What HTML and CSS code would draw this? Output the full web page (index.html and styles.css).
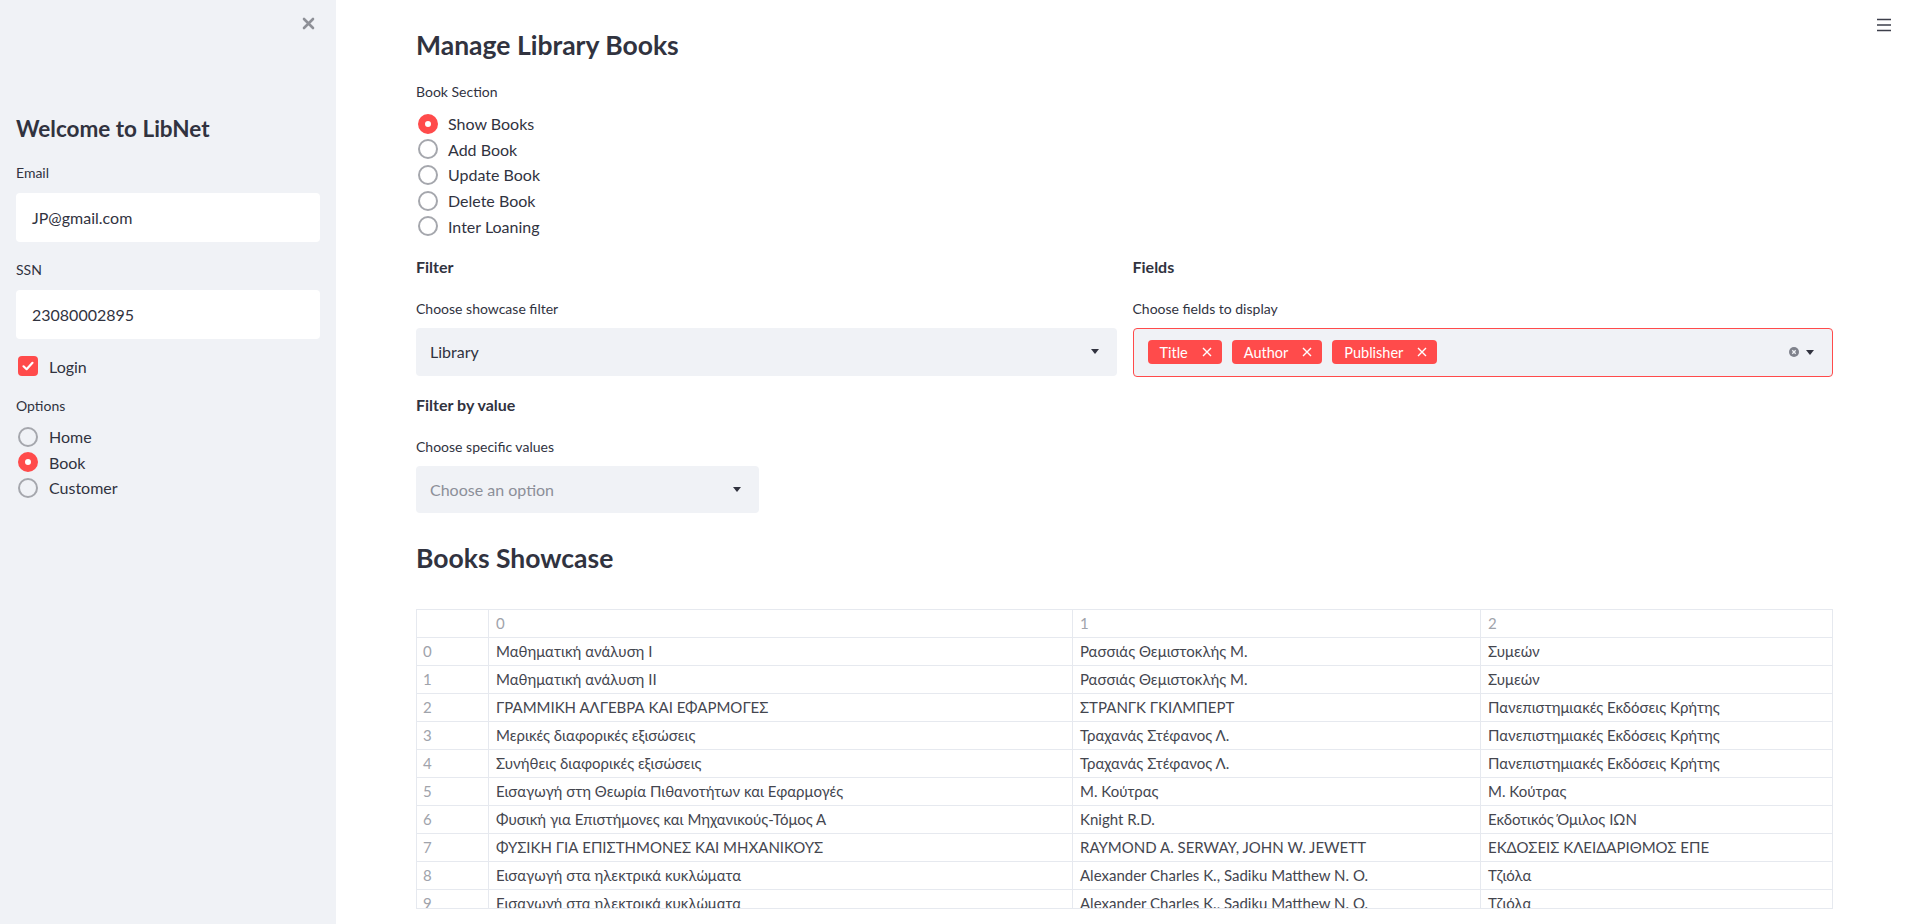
FILE: index.html
```html
<!DOCTYPE html>
<html lang="en">
<head>
<meta charset="utf-8">
<title>LibNet</title>
<link rel="stylesheet" href="styles.css">
</head>
<body>
<div class="app">
  <aside class="sidebar">
    <div class="close-row">
      <svg class="close-icon" width="13" height="13" viewBox="0 0 13 13"><path d="M2 2 L11 11 M11 2 L2 11" stroke="#8e9097" stroke-width="2.6" stroke-linecap="round"/></svg>
    </div>
    <h2 class="side-title">Welcome to LibNet</h2>
    <div class="side-label">Email</div>
    <div class="side-input">JP@gmail.com</div>
    <div class="side-label ssn">SSN</div>
    <div class="side-input">23080002895</div>
    <div class="check-row">
      <span class="checkbox"><svg width="14" height="14" viewBox="0 0 14 14"><path d="M2.5 7.3 L5.6 10.2 L11.5 3.8" fill="none" stroke="#fff" stroke-width="2.2" stroke-linecap="round" stroke-linejoin="round"/></svg></span>
      <span class="check-text">Login</span>
    </div>
    <div class="side-label options">Options</div>
    <div class="radio-group side-radios">
      <div class="radio-row"><span class="radio"></span><span>Home</span></div>
      <div class="radio-row"><span class="radio on"></span><span>Book</span></div>
      <div class="radio-row"><span class="radio"></span><span>Customer</span></div>
    </div>
  </aside>

  <main class="main">
    <svg class="menu-icon" width="14" height="14" viewBox="0 0 14 14"><path d="M0 1.5 H14 M0 7 H14 M0 12.5 H14" stroke="#3d3f4b" stroke-width="1.6"/></svg>
    <h1 class="page-title">Manage Library Books</h1>
    <div class="label">Book Section</div>
    <div class="radio-group main-radios">
      <div class="radio-row"><span class="radio on"></span><span>Show Books</span></div>
      <div class="radio-row"><span class="radio"></span><span>Add Book</span></div>
      <div class="radio-row"><span class="radio"></span><span>Update Book</span></div>
      <div class="radio-row"><span class="radio"></span><span>Delete Book</span></div>
      <div class="radio-row"><span class="radio"></span><span>Inter Loaning</span></div>
    </div>

    <div class="columns">
      <div class="col">
        <div class="section-head">Filter</div>
        <div class="label">Choose showcase filter</div>
        <div class="select">
          <span class="select-value">Library</span>
          <svg class="caret" width="8" height="5" viewBox="0 0 8 5"><path d="M0 0 H8 L4 5 Z" fill="#31333f"/></svg>
        </div>
        <div class="section-head">Filter by value</div>
        <div class="label">Choose specific values</div>
        <div class="select small">
          <span class="select-placeholder">Choose an option</span>
          <svg class="caret" width="8" height="5" viewBox="0 0 8 5"><path d="M0 0 H8 L4 5 Z" fill="#31333f"/></svg>
        </div>
      </div>
      <div class="col">
        <div class="section-head">Fields</div>
        <div class="label">Choose fields to display</div>
        <div class="multiselect">
          <div class="tags">
            <span class="tag">Title<svg width="10" height="10" viewBox="0 0 10 10"><path d="M1 1 L9 9 M9 1 L1 9" stroke="#fff" stroke-width="1.4"/></svg></span>
            <span class="tag">Author<svg width="10" height="10" viewBox="0 0 10 10"><path d="M1 1 L9 9 M9 1 L1 9" stroke="#fff" stroke-width="1.4"/></svg></span>
            <span class="tag">Publisher<svg width="10" height="10" viewBox="0 0 10 10"><path d="M1 1 L9 9 M9 1 L1 9" stroke="#fff" stroke-width="1.4"/></svg></span>
          </div>
          <div class="ms-icons">
            <svg width="10" height="10" viewBox="0 0 10 10"><circle cx="5" cy="5" r="5" fill="#7f828c"/><path d="M3.3 3.3 L6.7 6.7 M6.7 3.3 L3.3 6.7" stroke="#f0f2f6" stroke-width="1.3"/></svg>
            <svg width="8" height="5" viewBox="0 0 8 5"><path d="M0 0 H8 L4 5 Z" fill="#31333f"/></svg>
          </div>
        </div>
      </div>
    </div>

    <h1 class="page-title showcase">Books Showcase</h1>

    <div class="table-wrap">
      <div class="trow head">
        <div class="c idx"></div><div class="c c0">0</div><div class="c c1">1</div><div class="c c2">2</div>
      </div>
      <div class="trow"><div class="c idx">0</div><div class="c c0">Μαθηματική ανάλυση Ι</div><div class="c c1">Ρασσιάς Θεμιστοκλής Μ.</div><div class="c c2">Συμεών</div></div>
      <div class="trow"><div class="c idx">1</div><div class="c c0">Μαθηματική ανάλυση ΙΙ</div><div class="c c1">Ρασσιάς Θεμιστοκλής Μ.</div><div class="c c2">Συμεών</div></div>
      <div class="trow"><div class="c idx">2</div><div class="c c0">ΓΡΑΜΜΙΚΗ ΑΛΓΕΒΡΑ ΚΑΙ ΕΦΑΡΜΟΓΕΣ</div><div class="c c1">ΣΤΡΑΝΓΚ ΓΚΙΛΜΠΕΡΤ</div><div class="c c2">Πανεπιστημιακές Εκδόσεις Κρήτης</div></div>
      <div class="trow"><div class="c idx">3</div><div class="c c0">Μερικές διαφορικές εξισώσεις</div><div class="c c1">Τραχανάς Στέφανος Λ.</div><div class="c c2">Πανεπιστημιακές Εκδόσεις Κρήτης</div></div>
      <div class="trow"><div class="c idx">4</div><div class="c c0">Συνήθεις διαφορικές εξισώσεις</div><div class="c c1">Τραχανάς Στέφανος Λ.</div><div class="c c2">Πανεπιστημιακές Εκδόσεις Κρήτης</div></div>
      <div class="trow"><div class="c idx">5</div><div class="c c0">Εισαγωγή στη Θεωρία Πιθανοτήτων και Εφαρμογές</div><div class="c c1">Μ. Κούτρας</div><div class="c c2">Μ. Κούτρας</div></div>
      <div class="trow"><div class="c idx">6</div><div class="c c0">Φυσική για Επιστήμονες και Μηχανικούς-Τόμος Α</div><div class="c c1">Knight R.D.</div><div class="c c2">Εκδοτικός Όμιλος ΙΩΝ</div></div>
      <div class="trow"><div class="c idx">7</div><div class="c c0">ΦΥΣΙΚΗ ΓΙΑ ΕΠΙΣΤΗΜΟΝΕΣ ΚΑΙ ΜΗΧΑΝΙΚΟΥΣ</div><div class="c c1">RAYMOND A. SERWAY, JOHN W. JEWETT</div><div class="c c2">ΕΚΔΟΣΕΙΣ ΚΛΕΙΔΑΡΙΘΜΟΣ ΕΠΕ</div></div>
      <div class="trow"><div class="c idx">8</div><div class="c c0">Εισαγωγή στα ηλεκτρικά κυκλώματα</div><div class="c c1">Alexander Charles K., Sadiku Matthew N. O.</div><div class="c c2">Τζιόλα</div></div>
      <div class="trow"><div class="c idx">9</div><div class="c c0">Εισαγωγή στα ηλεκτρικά κυκλώματα</div><div class="c c1">Alexander Charles K., Sadiku Matthew N. O.</div><div class="c c2">Τζιόλα</div></div>
    </div>
  </main>
</div>
</body>
</html>
```

FILE: styles.css
```css
* { box-sizing: border-box; }
html, body { margin: 0; padding: 0; }
body {
  font-family: Lato, "Noto Sans", sans-serif;
  color: #31333f;
  background: #fff;
  overflow: hidden;
}
.app { display: flex; height: 924px; }

/* Sidebar */
.sidebar {
  width: 336px;
  flex: none;
  background: #f0f2f6;
  padding: 0 16px;
  display: flex;
  flex-direction: column;
}
.close-row { height: 30px; display: flex; justify-content: flex-end; align-items: flex-end; padding-right: 5px; }
.close-icon { display: block; }
.side-title { margin: 83px 0 0; font-size: 22.5px; font-weight: 700; line-height: 32px; height: 32px; }
.side-label { font-size: 14px; line-height: 20px; margin-top: 18px; }
.side-label.ssn { margin-top: 18px; }
.side-label.options { margin-top: 20px; }
.side-input {
  margin-top: 10px;
  height: 49px;
  background: #fff;
  border-radius: 4px;
  padding: 0 16px;
  display: flex;
  align-items: center;
  font-size: 16px;
}
.check-row { display: flex; align-items: center; margin-top: 17px; height: 20px; padding-left: 2px; }
.checkbox {
  width: 20px; height: 20px; border-radius: 4px; background: #ff4b4b;
  display: flex; align-items: center; justify-content: center;
}
.check-text { margin-left: 11px; font-size: 16px; }

.radio-group { display: flex; flex-direction: column; }
.radio-row { display: flex; align-items: center; height: 25.6px; font-size: 16px; padding-left: 2px; }
.radio {
  width: 20px; height: 20px; border-radius: 50%;
  border: 2px solid #a5a7ad;
  margin-right: 10px;
  flex: none;
}
.radio.on { border: 7px solid #ff4b4b; background: #fff; }
.side-radios { margin-top: 8px; }
.side-radios .radio { margin-right: 11px; }

/* Main */
.main {
  position: relative;
  flex: 1;
  padding: 27px 74px 0 80px;
  display: flex;
  flex-direction: column;
}
.menu-icon { position: absolute; top: 18px; right: 16px; }
.page-title { margin: 0; font-size: 26.5px; font-weight: 700; line-height: 36px; height: 36px; }
.label { font-size: 14px; line-height: 20px; margin-top: 19px; }
.main-radios { margin-top: 9px; }

.columns { display: grid; grid-template-columns: 1fr 1fr; gap: 16px; margin-top: 16px; }
.col { display: flex; flex-direction: column; }
.section-head { font-size: 16px; font-weight: 700; line-height: 24px; }
.col .label { margin-top: 20px; }
.col .select + .section-head { margin-top: 17px; }
.select {
  margin-top: 9px;
  height: 48px;
  background: #f0f2f6;
  border-radius: 4px;
  display: flex;
  align-items: center;
  justify-content: space-between;
  padding: 0 18px 0 14px;
  font-size: 16px;
}
.select.small { width: 343px; height: 47px; }
.select-placeholder { color: #8c8f99; }
.multiselect {
  margin-top: 9px;
  height: 49px;
  background: #f0f2f6;
  border: 1.5px solid #ff4b4b;
  border-radius: 4px;
  display: flex;
  align-items: center;
  justify-content: space-between;
  padding: 0 18px 0 14px;
}
.tags { display: flex; gap: 10px; }
.tag {
  height: 24px;
  background: #ff4b4b;
  color: #fff;
  border-radius: 4px;
  font-size: 14.5px;
  display: flex;
  align-items: center;
  gap: 14px;
  padding: 0 10px 0 12px;
}
.tag svg { display: block; }
.ms-icons { display: flex; align-items: center; gap: 7px; }
.ms-icons svg { display: block; }

.showcase { margin-top: 27px; }

.table-wrap {
  margin-top: 33px;
  height: 300px;
  border: 1px solid #e6e9ef;
  overflow: hidden;
}
.trow { display: flex; height: 28px; border-bottom: 1px solid #e6e9ef; }
.c {
  font-size: 15px;
  padding: 0 8px 0 7px;
  display: flex;
  align-items: center;
  white-space: nowrap;
  overflow: hidden;
  color: #44464f;
  border-right: 1px solid #e6e9ef;
}
.c:last-child { border-right: 0; }
.idx { width: 72px; flex: none; color: #a0a3ab; padding-left: 6px; }
.c0 { width: 584px; flex: none; }
.c1 { width: 408px; flex: none; }
.c2 { flex: 1; }
.head .c { color: #a0a3ab; }
```
